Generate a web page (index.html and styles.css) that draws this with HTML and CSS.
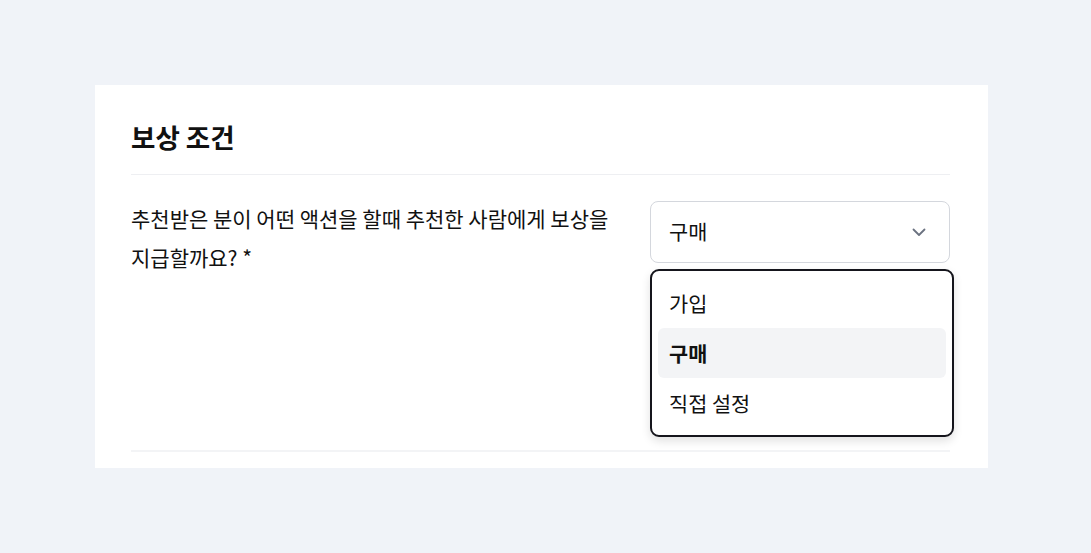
FILE: index.html
```html
<!DOCTYPE html>
<html>
  <head>
    <title>보상 조건</title>
    <link rel="stylesheet" href="styles.css">
  </head>
  <body>
    <div class="card">
      <h2 class="title">보상 조건</h2>

      <div class="row">
        <p class="question">추천받은 분이 어떤 액션을 할때 추천한 사람에게 보상을 지급할까요? *</p>

        <div class="select-wrap">
          <button class="select">
            <span>구매</span>
            <svg class="chevron" width="20" height="20" viewBox="0 0 20 20">
              <path d="M4.5 7.5 L10 13 L15.5 7.5" fill="none" stroke="#6b7280" stroke-width="1.8" stroke-linecap="round" stroke-linejoin="round"/>
            </svg>
          </button>

          <ul class="menu">
            <li class="option">가입</li>
            <li class="option selected">구매</li>
            <li class="option">직접 설정</li>
          </ul>
        </div>
      </div>

      <div class="bottom-line"></div>
    </div>
  </body>
</html>
```

FILE: styles.css
```css
body{
  margin: 0;
  background-color: #f0f3f8;
  font-family: "Noto Sans CJK KR", "Noto Sans", sans-serif;
  color: #111111;
}
.card{
  background-color: #ffffff;
  margin: 85px 103px 0 95px;
  padding: 30px 38px 16px 36px;
}
.title{
  margin: 0;
  font-size: 26.5px;
  font-weight: 700;
  line-height: 44px;
  padding-bottom: 15px;
  border-bottom: 1px solid #eeeff2;
}
.row{
  display: flex;
  justify-content: space-between;
  padding-top: 26px;
  height: 249px;
}
.question{
  margin: 0;
  width: 500px;
  font-size: 21px;
  line-height: 39px;
  margin-top: -2px;
  word-break: keep-all;
}
.select-wrap{
  position: relative;
  width: 300px;
}
.select{
  width: 300px;
  height: 62px;
  box-sizing: border-box;
  display: flex;
  align-items: center;
  justify-content: space-between;
  padding: 0 20px 3px 18px;
  background-color: #ffffff;
  border: 1.5px solid #d4d7dd;
  border-radius: 8px;
  font-family: inherit;
  font-size: 20.8px;
  color: #111111;
}
.chevron{
  margin-top: 3px;
}
.menu{
  position: absolute;
  top: 68px;
  left: 0;
  width: 304px;
  box-sizing: border-box;
  margin: 0;
  padding: 7px 6px;
  list-style: none;
  background-color: #ffffff;
  border: 2px solid #15151c;
  border-radius: 9px;
  box-shadow: 0 4px 10px rgba(0, 0, 0, 0.12);
}
.option{
  height: 50px;
  line-height: 50px;
  padding-left: 11px;
  font-size: 20.8px;
  border-radius: 6px;
}
.selected{
  background-color: #f3f4f6;
  font-weight: 700;
}
.bottom-line{
  height: 0;
  border-top: 2px solid #f3f4f6;
}
```
